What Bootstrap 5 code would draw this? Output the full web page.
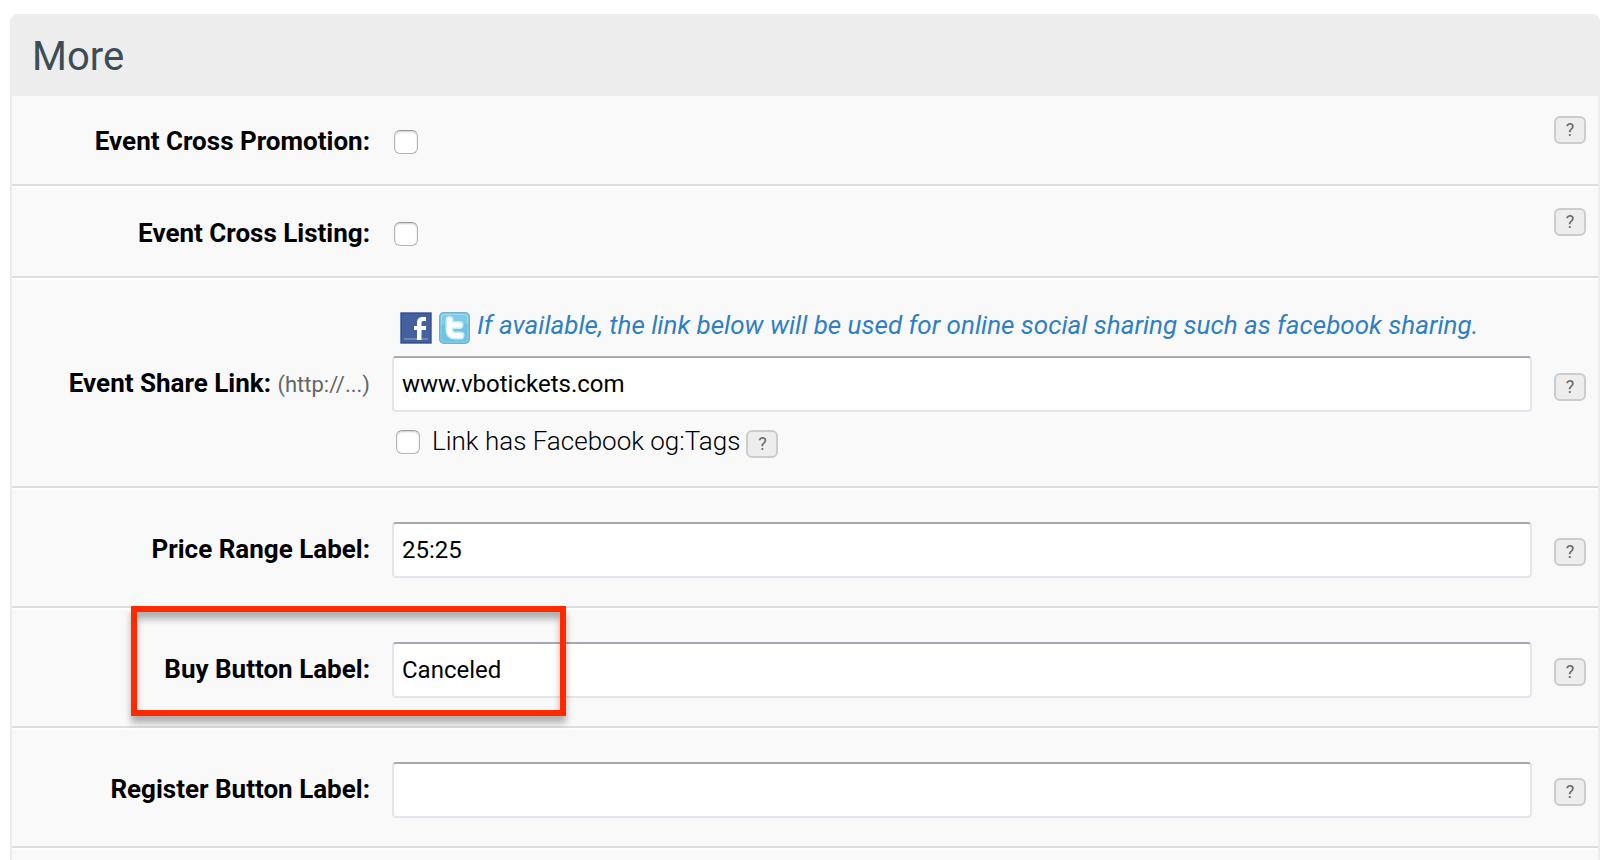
<!DOCTYPE html>
<html lang="en">
<head>
<meta charset="utf-8">
<meta name="viewport" content="width=device-width, initial-scale=1">
<title>Event settings – More</title>
<link href="https://cdn.jsdelivr.net/npm/bootstrap@5.3.0/dist/css/bootstrap.min.css" rel="stylesheet">
<style>
  body { font-family: Roboto, "Liberation Sans", sans-serif; font-size: 26px; line-height: 32px; color: #000; background: #fff; }
  .page { padding: 14px 8px 0 10px; }
  .panel { background: #f9f9f9; border: 2px solid #ededed; border-width: 0 2px; border-radius: 8px 8px 0 0; }
  .panel-head { background: #ededed; margin: 0 -2px; padding: 19px 22px 15px; border-radius: 8px 8px 0 0; }
  .panel-head h1 { font-size: 40px; line-height: 48px; font-weight: 400; color: #3d4d55; }
  .setting { display: grid; grid-template-columns: 358px minmax(0, 1fr) 32px; column-gap: 22px; align-items: center;
    padding: 32px 12px 28px 0; border-top: 2px solid #fff; border-bottom: 2px solid #ddd; }
  .setting.toggle { padding: 20px 12px 20px 0; min-height: 92px; }
  .setting.toggle:first-of-type { border-top: 0; min-height: 90px; }
  .setting.toggle .help { align-self: start; margin-top: 0; }
  .setting-label { text-align: right; font-weight: 700; padding-bottom: 2px; }
  .setting.toggle .setting-label { padding: 2px 0 0; }
  .hint { font-size: 22px; font-weight: 400; color: #666; }
  .setting .form-control { height: 56px; padding: 0 8px; font-size: 24px; line-height: 32px; color: #000; background: #fff;
    border: 2px solid #e2e5ec; border-top-color: #a9a9b1; border-radius: 4px; }
  .tick { appearance: none; flex: none; width: 24px; height: 24px; margin: 0; background: #fff;
    border: 1px solid #b4b4b4; border-top-color: #999; border-radius: 6px; box-shadow: inset 0 1px 2px rgba(0,0,0,.2); }
  .tick:checked { background: #2f7fc4; }
  .setting.toggle .tick { margin: 4px 0 0 2px; }
  .help { width: 32px; height: 28px; padding: 0; margin-top: 4px; font-size: 18px; line-height: 22px; color: #666;
    background: #ededed; border: 2px solid #ccc; border-radius: 6px; }
  .share-note { gap: 7px; height: 32px; margin-bottom: 12px; padding-left: 8px; font-style: italic; line-height: 26px; color: #2f7fc4; }
  .share-note svg { flex: none; }
  .og-line { margin-top: 18px; padding-left: 4px; height: 28px; font-weight: 300; line-height: 22px; }
  .og-line label { padding: 0 6px 0 12px; }
  .og-line .help { margin-top: 0; }
  .callout { top: -4px; left: 119px; width: 435px; height: 110px; border: 6px solid #ff2a00; pointer-events: none;
    box-shadow: 0 7px 7px rgba(0,0,0,.3), inset 0 7px 7px rgba(0,0,0,.3); }
</style>
</head>
<body>
<main class="page min-vh-100 d-flex flex-column">
  <form class="panel flex-grow-1 d-flex flex-column">
    <header class="panel-head"><h1 class="m-0">More</h1></header>

    <div class="setting toggle">
      <label class="setting-label" for="crossPromo">Event Cross Promotion:</label>
      <div class="d-flex"><input class="tick" type="checkbox" id="crossPromo"></div>
      <button type="button" class="help">?</button>
    </div>

    <div class="setting toggle">
      <label class="setting-label" for="crossList">Event Cross Listing:</label>
      <div class="d-flex"><input class="tick" type="checkbox" id="crossList"></div>
      <button type="button" class="help">?</button>
    </div>

    <div class="setting">
      <label class="setting-label" for="shareLink">Event Share Link: <span class="hint">(http://...)</span></label>
      <div>
        <div class="share-note d-flex">
          <svg width="32" height="32" viewBox="0 0 32 32" aria-hidden="true">
            <rect width="32" height="32" rx="1" fill="#7085b5"/>
            <rect x="1" y="1" width="30" height="30" fill="#35508c"/>
            <rect x="2" y="2" width="28" height="28" fill="#43609f"/>
            <path d="M4 26h24v2H4z" fill="#6d84b8"/>
            <path d="M17 28V18h-3v-4h3v-3c0-4 2-6 5.500-6H26v4h-2.500c-1.500 0-2 .7-2 2v3H26v4h-4.500v10z" fill="#fff"/>
          </svg>
          <svg width="31" height="32" viewBox="0 0 31 32" aria-hidden="true">
            <rect x=".8" y=".8" width="29.400" height="30.400" rx="4" fill="#7fcbe8" stroke="#6fb3cc" stroke-width="1.600"/>
            <rect x="2.300" y="2.300" width="26.400" height="27.400" rx="3" fill="none" stroke="#a8def0"/>
            <path d="M2 12q13 4 27-1v15q0 4-4 4H6q-4 0-4-4z" fill="#62b9dd" opacity=".5"/>
            <path d="M10.500 8v10q0 5.500 5.500 5.500H21.500M10.500 13h10" fill="none" stroke="#c5ebf7" stroke-width="8" stroke-linecap="round"/>
            <path d="M10.500 8v10q0 5.500 5.500 5.500H21.500M10.500 13h10" fill="none" stroke="#fff" stroke-width="5" stroke-linecap="round"/>
          </svg>
          <span>If available, the link below will be used for online social sharing such as facebook sharing.</span>
        </div>
        <input type="text" class="form-control" id="shareLink" value="www.vbotickets.com">
        <div class="og-line d-flex align-items-start">
          <input class="tick" type="checkbox" id="ogTags">
          <label for="ogTags">Link has Facebook og:Tags</label>
          <button type="button" class="help">?</button>
        </div>
      </div>
      <button type="button" class="help">?</button>
    </div>

    <div class="setting">
      <label class="setting-label" for="priceRange">Price Range Label:</label>
      <input type="text" class="form-control" id="priceRange" value="25:25">
      <button type="button" class="help">?</button>
    </div>

    <div class="setting position-relative">
      <label class="setting-label" for="buyLabel">Buy Button Label:</label>
      <input type="text" class="form-control" id="buyLabel" value="Canceled">
      <button type="button" class="help">?</button>
      <div class="callout position-absolute"></div>
    </div>

    <div class="setting">
      <label class="setting-label" for="registerLabel">Register Button Label:</label>
      <input type="text" class="form-control" id="registerLabel" value="">
      <button type="button" class="help">?</button>
    </div>
    <div class="border-top border-2 border-white"></div>
  </form>
</main>
<script src="https://cdn.jsdelivr.net/npm/bootstrap@5.3.0/dist/js/bootstrap.bundle.min.js"></script>
</body>
</html>
